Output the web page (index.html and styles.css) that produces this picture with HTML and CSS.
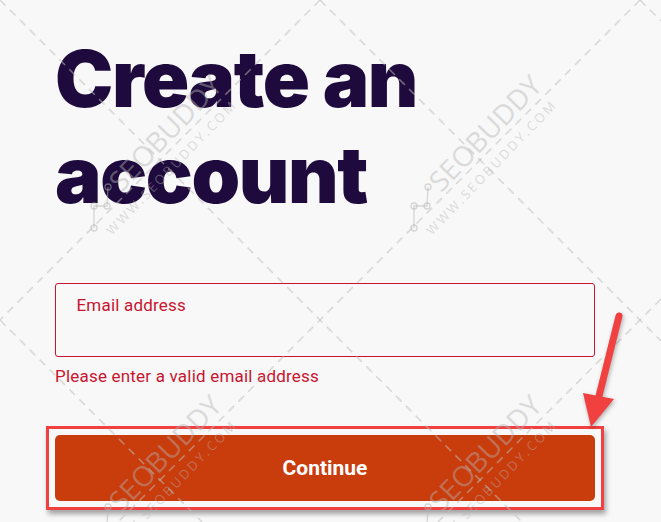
FILE: index.html
```html
<!DOCTYPE html>
<html lang="en">
<head>
<meta charset="utf-8">
<title>Create an account</title>
<link rel="stylesheet" href="styles.css">
</head>
<body>
<main class="page">
  <h1 class="title">Create an account</h1>
  <div class="field">
    <label class="field-label" for="email">Email address</label>
    <input class="field-input" id="email" type="email">
  </div>
  <p class="field-error">Please enter a valid email address</p>
  <div class="cta">
    <button class="cta-button" type="button">Continue</button>
    <span class="cta-highlight"></span>
  </div>
</main>

<svg class="overlay" width="661" height="522" viewBox="0 0 661 522" aria-hidden="true">
  <g class="wm-lines">
    <line x1="0" y1="0" x2="522" y2="522"/>
    <line x1="320" y1="0" x2="661" y2="341"/>
    <line x1="640" y1="0" x2="661" y2="21"/>
    <line x1="0" y1="320" x2="202" y2="522"/>
    <line x1="320" y1="0" x2="0" y2="320"/>
    <line x1="640" y1="0" x2="118" y2="522"/>
    <line x1="661" y1="299" x2="438" y2="522"/>
  </g>
  <g class="wm">
    <g transform="translate(487,135) rotate(-46)">
      <text class="wm-big" x="0" y="0">SEOBUDDY</text>
      <text class="wm-small" x="-20" y="27">WWW.SEOBUDDY.COM</text>
    </g>
    <g transform="translate(167,135) rotate(-46)">
      <text class="wm-big" x="0" y="0">SEOBUDDY</text>
      <text class="wm-small" x="-20" y="27">WWW.SEOBUDDY.COM</text>
    </g>
    <g transform="translate(487,455) rotate(-46)">
      <text class="wm-big" x="0" y="0">SEOBUDDY</text>
      <text class="wm-small" x="-20" y="27">WWW.SEOBUDDY.COM</text>
    </g>
    <g transform="translate(167,455) rotate(-46)">
      <text class="wm-big" x="0" y="0">SEOBUDDY</text>
      <text class="wm-small" x="-20" y="27">WWW.SEOBUDDY.COM</text>
    </g>
  </g>
  <g class="wm-icon">
    <g><polyline points="428,187 427,206 414,206 414,228"/><circle cx="428" cy="187" r="3"/><circle cx="427" cy="206" r="3"/><circle cx="414" cy="206" r="3"/><circle cx="414" cy="228" r="3"/></g>
    <g transform="translate(-320,0)"><polyline points="428,187 427,206 414,206 414,228"/><circle cx="428" cy="187" r="3"/><circle cx="427" cy="206" r="3"/><circle cx="414" cy="206" r="3"/><circle cx="414" cy="228" r="3"/></g>
    <g transform="translate(0,320)"><polyline points="428,187 427,206 414,206 414,228"/><circle cx="428" cy="187" r="3"/><circle cx="427" cy="206" r="3"/><circle cx="414" cy="206" r="3"/><circle cx="414" cy="228" r="3"/></g>
    <g transform="translate(-320,320)"><polyline points="428,187 427,206 414,206 414,228"/><circle cx="428" cy="187" r="3"/><circle cx="427" cy="206" r="3"/><circle cx="414" cy="206" r="3"/><circle cx="414" cy="228" r="3"/></g>
  </g>
  <g class="arrow">
    <line x1="619" y1="316" x2="598" y2="400"/>
    <polygon points="583,393 614,399 591,427"/>
  </g>
</svg>
</body>
</html>
```

FILE: styles.css
```css
html, body {
  margin: 0;
  padding: 0;
}

body {
  background: #f8f8f8;
  width: 661px;
  height: 522px;
  overflow: hidden;
  position: relative;
  font-family: Roboto, "Liberation Sans", sans-serif;
}

.page {
  padding: 31px 0 0 55px;
  width: 540px;
  display: flex;
  flex-direction: column;
}

.title {
  margin: 0;
  font-family: Inter, "Liberation Sans", sans-serif;
  font-weight: 900;
  font-size: 78px;
  line-height: 96px;
  letter-spacing: -1.4px;
  color: #1e0a3c;
  width: 430px;
}

.field {
  margin-top: 60px;
  height: 74px;
  box-sizing: border-box;
  border: 1.5px solid #c8142f;
  border-radius: 3px;
  padding: 10.5px 20.5px 0;
  display: flex;
  flex-direction: column;
}

.field-label {
  font-size: 17px;
  line-height: 20px;
  letter-spacing: 0.2px;
  color: #c8142f;
}

.field-input {
  border: 0;
  background: transparent;
  outline: none;
  height: 26px;
  padding: 0;
  font: inherit;
}

.field-error {
  margin: 9px 0 0;
  font-size: 17px;
  line-height: 20px;
  letter-spacing: 0.2px;
  color: #c8142f;
}

.cta {
  position: relative;
  margin-top: 49px;
}

.cta-button {
  display: block;
  width: 100%;
  height: 66px;
  border: 0;
  border-radius: 5px;
  background: #c93c0c;
  color: #ffffff;
  font-family: Roboto, "Liberation Sans", sans-serif;
  font-weight: 700;
  font-size: 21px;
  padding: 0;
}

.cta-highlight {
  position: absolute;
  top: -9px;
  left: -9px;
  right: -9px;
  bottom: -9px;
  border: 3px solid #f0403f;
  box-shadow: 2px 4px 5px rgba(0, 0, 0, 0.35);
  pointer-events: none;
}

.overlay {
  position: absolute;
  top: 0;
  left: 0;
  pointer-events: none;
}

.wm-lines line {
  stroke: rgba(190, 190, 190, 0.55);
  stroke-width: 1.5;
  stroke-dasharray: 8 6;
}

.wm text {
  fill: rgba(180, 180, 180, 0.45);
  font-family: "Open Sans", sans-serif;
  text-anchor: middle;
}

.wm-big {
  font-size: 28px;
  dominant-baseline: middle;
}

.wm-small {
  font-size: 13px;
  letter-spacing: 2.5px;
  dominant-baseline: middle;
}

.wm-icon polyline,
.wm-icon circle {
  fill: none;
  stroke: rgba(180, 180, 180, 0.5);
  stroke-width: 1.3;
}

.arrow line {
  stroke: #f0403f;
  stroke-width: 7;
  stroke-linecap: round;
}

.arrow polygon {
  fill: #f0403f;
}

.arrow {
  filter: drop-shadow(1px 2px 2px rgba(0, 0, 0, 0.3));
}
```
